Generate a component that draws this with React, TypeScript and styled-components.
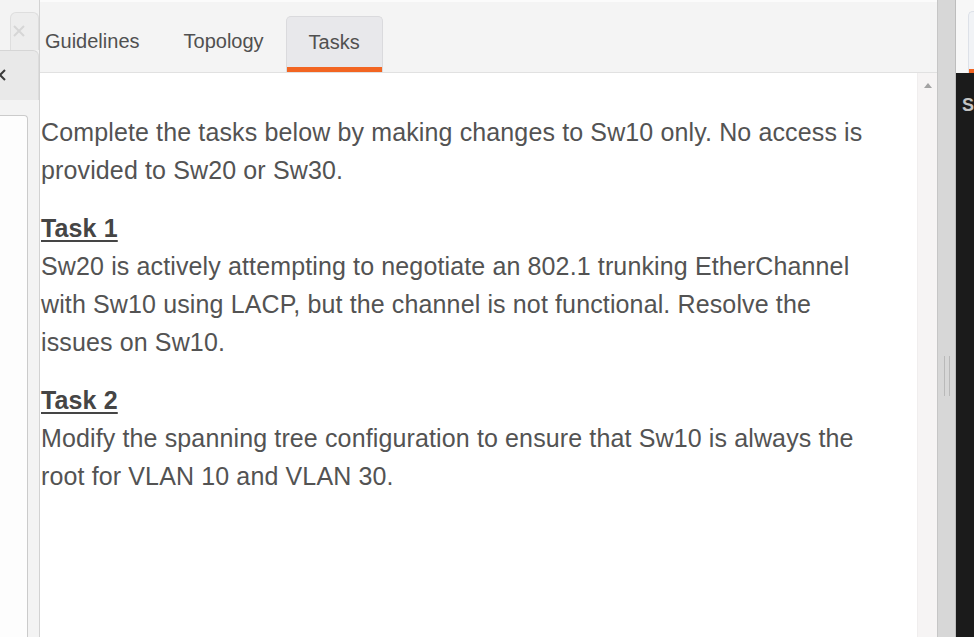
import styled, { createGlobalStyle } from "styled-components"

const GlobalStyle = createGlobalStyle`
    html, body {
        margin: 0;
        padding: 0;
        overflow: hidden;
        background: #f1f1f1;
        font-family: "Liberation Sans", Arial, sans-serif;
    }
`

const tabs = ["Guidelines", "Topology", "Tasks"]

function CloseIcon({ color }: { color: string }) {
    return (
        <svg width="12" height="12" viewBox="0 0 12 12">
            <path d="M1 1 L11 11 M11 1 L1 11" stroke={color} strokeWidth="2" fill="none" />
        </svg>
    )
}

export default function App() {
    return (
        <Screen>
            <GlobalStyle />
            <LeftStrip>
                <GhostTab>
                    <CloseIcon color="#d6d6d6" />
                </GhostTab>
                <CloseRow>
                    <CloseIcon color="#3a3a3a" />
                </CloseRow>
                <SidePane />
            </LeftStrip>

            <Main>
                <TabBar>
                    {tabs.map(t => (
                        <Tab key={t} $active={t === "Tasks"}>{t}</Tab>
                    ))}
                </TabBar>
                <Body>
                    <Content>
                        <Para>
                            Complete the tasks below by making changes to Sw10 only. No access is
                            provided to Sw20 or Sw30.
                        </Para>
                        <Para>
                            <Heading>Task 1</Heading>
                            Sw20 is actively attempting to negotiate an 802.1 trunking EtherChannel
                            with Sw10 using LACP, but the channel is not functional. Resolve the
                            issues on Sw10.
                        </Para>
                        <Para>
                            <Heading>Task 2</Heading>
                            Modify the spanning tree configuration to ensure that Sw10 is always the
                            root for VLAN 10 and VLAN 30.
                        </Para>
                    </Content>
                    <ScrollTrack>
                        <UpArrow />
                    </ScrollTrack>
                </Body>
            </Main>

            <Splitter>
                <Grip />
            </Splitter>

            <RightPane>
                <RightHead>
                    <RightTab />
                </RightHead>
                <Terminal>S</Terminal>
            </RightPane>
        </Screen>
    )
}

const Screen = styled.div`
    display: flex;
    width: 974px;
    height: 637px;
    overflow: hidden;
    background: #f1f1f1;
`

const LeftStrip = styled.div`
    width: 39px;
    flex-shrink: 0;
    display: flex;
    flex-direction: column;
    padding-top: 12px;
    box-sizing: border-box;
    background: #f3f3f3;
`

const GhostTab = styled.div`
    height: 38px;
    margin-left: 10px;
    box-sizing: border-box;
    border: 1px solid #dedede;
    border-bottom: none;
    border-radius: 6px 6px 0 0;
    background: #ededed;
    padding: 12px 0 0 2px;
    svg {
        display: block;
    }
`

const CloseRow = styled.div`
    height: 50px;
    box-sizing: border-box;
    border-top: 1px solid #d6d6d6;
    border-right: 1px solid #dcdcdc;
    border-radius: 0 6px 0 0;
    background: #e9e9e9;
    overflow: hidden;
    padding-top: 18px;
    svg {
        display: block;
        margin-left: -6px;
    }
`

const SidePane = styled.div`
    flex: 1;
    width: 28px;
    margin-top: 15px;
    box-sizing: border-box;
    background: #fdfdfd;
    border: 1px solid #cbcbcb;
    border-left: none;
    border-bottom: none;
    border-radius: 0 4px 0 0;
`

const Main = styled.div`
    width: 898px;
    flex-shrink: 0;
    display: flex;
    flex-direction: column;
    border-left: 1px solid #d2d2d2;
    box-sizing: border-box;
`

const TabBar = styled.div`
    height: 73px;
    box-sizing: border-box;
    display: flex;
    align-items: flex-end;
    background: #f4f4f4;
    border-top: 2px solid #fbfbfb;
    border-bottom: 1px solid #e1e1e1;
`

const Tab = styled.div<{ $active?: boolean }>`
    height: 56px;
    box-sizing: border-box;
    display: flex;
    align-items: center;
    padding: 0 22px 5px;
    font-size: 20px;
    color: #505050;
    &:first-child {
        padding-left: 5px;
    }
    ${p => p.$active && `
        background: #e8e8eb;
        border: 1px solid #dadadd;
        border-bottom: none;
        border-radius: 5px 5px 0 0;
        box-shadow: inset 0 -5px 0 #f26522;
        padding-top: 1px;
    `}
`

const Body = styled.div`
    flex: 1;
    display: flex;
    background: #fff;
`

const Content = styled.div`
    flex: 1;
    padding: 40px 36px 0 1px;
    font-size: 25px;
    letter-spacing: 0.13px;
    line-height: 38px;
    color: #535353;
`

const Para = styled.p`
    margin: 0 0 20px;
`

const Heading = styled.span`
    display: block;
    font-weight: bold;
    color: #454545;
    text-decoration: underline;
    text-decoration-thickness: 2px;
    text-underline-offset: 3px;
`

const ScrollTrack = styled.div`
    width: 20px;
    flex-shrink: 0;
    background: #f6f4f4;
    border-left: 1px solid #f0eeee;
    box-sizing: border-box;
    padding-top: 10px;
    display: flex;
    justify-content: center;
`

const UpArrow = styled.div`
    width: 0;
    height: 0;
    border-left: 4px solid transparent;
    border-right: 4px solid transparent;
    border-bottom: 5px solid #a3a3a3;
`

const Splitter = styled.div`
    width: 19px;
    flex-shrink: 0;
    box-sizing: border-box;
    background: #d7d7d7;
    border-left: 1px solid #c6c6c6;
    border-right: 1px solid #bdbdbd;
    display: flex;
    justify-content: center;
    padding-top: 356px;
`

const Grip = styled.div`
    width: 6px;
    height: 40px;
    box-sizing: border-box;
    border-left: 1px solid #b9b9b9;
    border-right: 1px solid #b9b9b9;
`

const RightPane = styled.div`
    flex: 1;
    display: flex;
    flex-direction: column;
`

const RightHead = styled.div`
    height: 73px;
    box-sizing: border-box;
    background: #f7f7f7;
    padding: 11px 0 0 12px;
    display: flex;
`

const RightTab = styled.div`
    flex: 1;
    box-sizing: border-box;
    border: 1px solid #dde1e8;
    border-right: none;
    border-bottom: none;
    border-radius: 5px 0 0 0;
    background: #f1f3f6;
    box-shadow: inset 0 -4px 0 #f26522;
`

const Terminal = styled.div`
    flex: 1;
    background: #1b1b1b;
    color: #c4c4c4;
    font-size: 18px;
    font-weight: bold;
    padding: 22px 0 0 6px;
`
